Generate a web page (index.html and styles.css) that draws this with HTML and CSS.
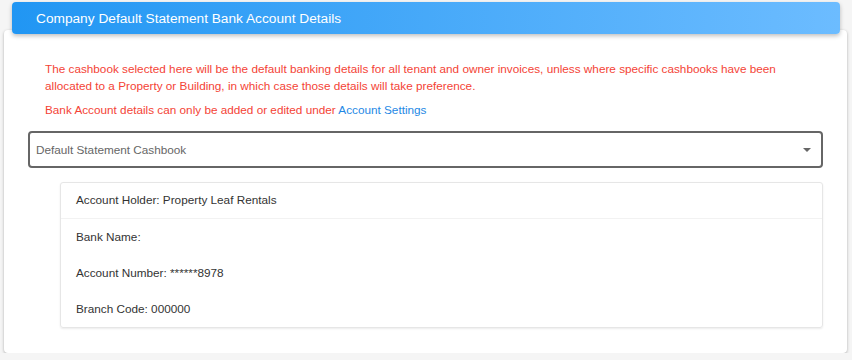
FILE: index.html
```html
<!DOCTYPE html>
<html lang="en">
<head>
    <meta charset="UTF-8">
    <meta name="viewport" content="width=device-width, initial-scale=1.0">
    <title>Company Default Statement Bank Account Details</title>
    <link rel="stylesheet" href="styles.css">
</head>
<body>
    <div class="panel">
        <div class="panel-header">
            Company Default Statement Bank Account Details
        </div>
        <div class="panel-body">
            <div class="notice">
                <p>The cashbook selected here will be the default banking details for all tenant and owner invoices, unless where specific cashbooks have been allocated to a Property or Building, in which case those details will take preference.</p>
                <p>Bank Account details can only be added or edited under <a href="#">Account Settings</a></p>
            </div>

            <!-- Cashbook select -->
            <div class="select-box">
                <span class="select-label">Default Statement Cashbook</span>
                <span class="select-arrow"></span>
            </div>

            <ul class="account-list">
                <li>Account Holder: Property Leaf Rentals</li>
                <li>Bank Name:</li>
                <li>Account Number: ******8978</li>
                <li>Branch Code: 000000</li>
            </ul>
        </div>
    </div>
</body>
</html>
```

FILE: styles.css
```css
body {
    font-family: "Liberation Sans", Arial, sans-serif;
    background-color: #f5f5f5;
    margin: 0;
    padding: 2px 5px 0 4px;
}
.panel-header {
    position: relative;
    z-index: 1;
    margin: 0 7px 0 8px;
    height: 32px;
    padding-left: 24px;
    display: flex;
    align-items: center;
    color: #fff;
    font-size: 13.7px;
    background: linear-gradient(90deg, #2196f3, #6cbcff);
    border-radius: 4px;
    box-shadow: 0px 2px 4px rgba(0, 0, 0, 0.25);
}
.panel-body {
    margin-top: -4px;
    padding: 30px 24px 25px 24px;
    background: #fff;
    border-radius: 4px;
    box-shadow: 0px 1px 3px rgba(0, 0, 0, 0.3);
}
.notice {
    padding-left: 17px;
    color: #f44336;
    font-size: 11.75px;
    line-height: 17px;
}
.notice p {
    margin: 0 0 7px 0;
}
.notice a {
    color: #1e88e5;
    text-decoration: none;
}
.select-box {
    margin-top: 13px;
    height: 33px;
    border: 2px solid #666;
    border-radius: 4px;
    display: flex;
    align-items: center;
    justify-content: space-between;
    padding: 0 10px 0 6px;
}
.select-label {
    color: #666;
    font-size: 11.75px;
}
.select-arrow {
    width: 0;
    height: 0;
    border-left: 4px solid transparent;
    border-right: 4px solid transparent;
    border-top: 4px solid #666;
}
.account-list {
    list-style: none;
    margin: 14px 0 0 32px;
    padding: 0;
    border: 1px solid #e6e6e6;
    border-radius: 3px;
    box-shadow: 0px 1px 2px rgba(0, 0, 0, 0.08);
}
.account-list li {
    padding: 9px 15px 10px 15px;
    line-height: 17px;
    font-size: 11.75px;
    color: #333;
}
.account-list li:first-child {
    border-bottom: 1px solid #f2f2f2;
    padding-top: 8px;
}
```
